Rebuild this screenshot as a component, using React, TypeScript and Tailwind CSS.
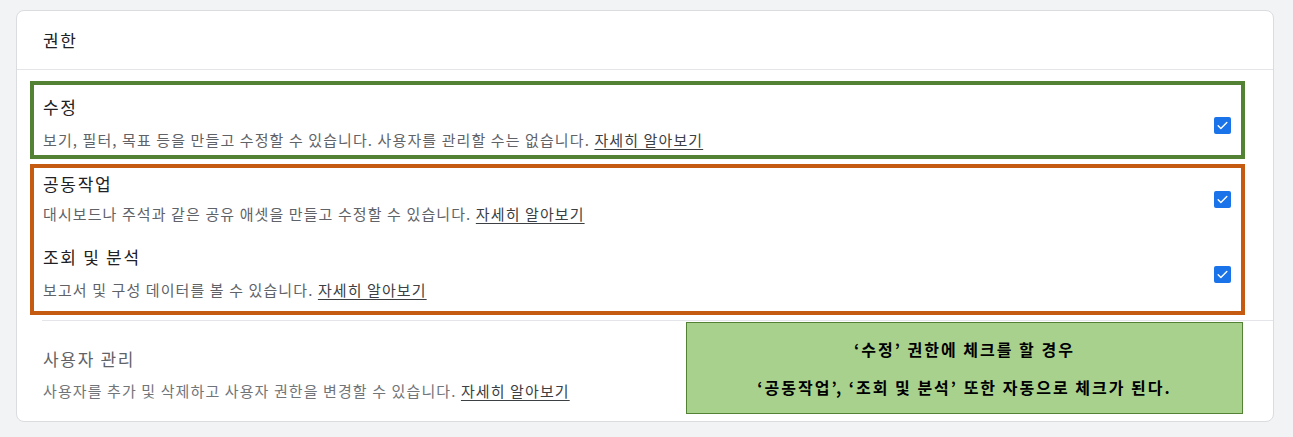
const font = { fontFamily: '"Noto Sans CJK KR", "Noto Sans", sans-serif' };

function Check({ offset }: { offset: string }) {
  return (
    <span className={`flex h-[17px] w-[17px] shrink-0 items-center justify-center rounded-[2px] bg-[#1a73e8] ${offset}`}>
      <svg width="13" height="13" viewBox="0 0 24 24" fill="none">
        <path d="M4 12.5l5 5L20 6.5" stroke="white" strokeWidth="2.6" strokeLinecap="round" strokeLinejoin="round" />
      </svg>
    </span>
  );
}

function Desc({ text, muted }: { text: string; muted?: boolean }) {
  return (
    <p className={`text-[15px] leading-[20px] tracking-[1.1px] ${muted ? "text-[#70757a]" : "text-[#5f6368]"}`}>
      {text} <span className="underline underline-offset-[3px] text-[#3c4043]">자세히 알아보기</span>
    </p>
  );
}

export default function App() {
  return (
    <div className="min-h-[437px] w-full bg-[#f1f3f4] pt-[10px] pb-[13px]" style={font}>
      <div className="relative mx-[16px] w-[1258px] rounded-lg border border-[#dadce0] bg-white">
        <div className="flex h-[59px] items-center border-b border-[#e3e5e8] px-[26px] text-[17px] tracking-[1.6px] text-[#202124]">
          권한
        </div>

        <div className="pl-[13px] pr-[28px] pt-[11px]">
          <div className="flex items-center border-4 border-[#548235] pl-[9px] pr-[10px] pt-[10px] pb-[5px]">
            <div className="flex-1">
              <h3 className="text-[17px] leading-[24px] tracking-[1.7px] text-[#202124]">수정</h3>
              <div className="mt-[11px]">
                <Desc text="보기, 필터, 목표 등을 만들고 수정할 수 있습니다. 사용자를 관리할 수는 없습니다." />
              </div>
            </div>
            <Check offset="mt-[5px]" />
          </div>

          <div className="mt-[5px] border-4 border-[#c55a11] pl-[9px] pr-[10px] pt-[4px] pb-[11px]">
            <div className="flex items-center">
              <div className="flex-1">
                <h3 className="text-[17px] leading-[24px] tracking-[1.7px] text-[#202124]">공동작업</h3>
                <div className="mt-[8px]">
                  <Desc text="대시보드나 주석과 같은 공유 애셋을 만들고 수정할 수 있습니다." />
                </div>
              </div>
              <Check offset="mt-[3px]" />
            </div>
            <div className="mt-[21px] flex items-center">
              <div className="flex-1">
                <h3 className="text-[17px] leading-[24px] tracking-[1.7px] text-[#202124]">조회 및 분석</h3>
                <div className="mt-[11px]">
                  <Desc text="보고서 및 구성 데이터를 볼 수 있습니다." />
                </div>
              </div>
              <Check offset="mt-[3px]" />
            </div>
          </div>
        </div>

        <div className="ml-[25px] mt-[5px] border-t border-[#e3e5e8] pl-[1px] pt-[26px] pb-[20px]">
          <h3 className="text-[17px] leading-[24px] tracking-[1.7px] text-[#5f6368]">사용자 관리</h3>
          <div className="mt-[10px]">
            <Desc text="사용자를 추가 및 삭제하고 사용자 권한을 변경할 수 있습니다." muted />
          </div>
        </div>

        <div className="absolute left-[669px] top-[311px] flex h-[92px] w-[557px] flex-col items-center justify-center gap-[14px] border border-[#548235] bg-[#a9d18e] text-[16px] font-bold leading-[24px] tracking-[2px] text-black">
          <p>‘수정’ 권한에 체크를 할 경우</p>
          <p>‘공동작업’, ‘조회 및 분석’ 또한 자동으로 체크가 된다.</p>
        </div>
      </div>
    </div>
  );
}
